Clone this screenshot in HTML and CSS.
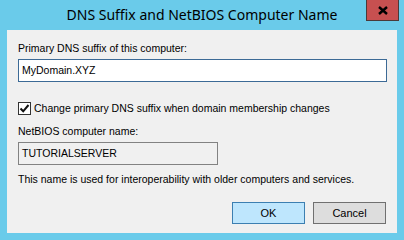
FILE: index.html
```html
<!DOCTYPE html>
<html>
<head>
<meta charset="utf-8">
<link rel="stylesheet" href="styles.css">
</head>
<body>
<div class="window">
  <div class="titlebar">
    <div class="title">DNS Suffix and NetBIOS Computer Name</div>
    <div class="close">
      <svg width="10" height="9" viewBox="0 0 10 9"><path d="M1 1 L9 8 M9 1 L1 8" stroke="#000" stroke-width="2.4" fill="none"/></svg>
    </div>
  </div>
  <div class="client">
    <div class="label">Primary DNS suffix of this computer:</div>
    <div class="input focus">MyDomain.XYZ</div>
    <div class="check-row">
      <span class="checkbox"><svg width="11" height="11" viewBox="0 0 11 11"><path d="M1.5 5.5 L4.2 8.3 L9.5 2" stroke="#111" stroke-width="2" fill="none"/></svg></span>
      <span class="check-label">Change primary DNS suffix when domain membership changes</span>
    </div>
    <div class="label nb">NetBIOS computer name:</div>
    <div class="input readonly">TUTORIALSERVER</div>
    <div class="note">This name is used for interoperability with older computers and services.</div>
    <div class="buttons">
      <button class="btn default">OK</button>
      <button class="btn">Cancel</button>
    </div>
  </div>
</div>
</body>
</html>
```

FILE: styles.css
```css
html, body {
  margin: 0;
  padding: 0;
}
body {
  width: 404px;
  height: 240px;
  background: #6acbea;
  overflow: hidden;
}
.window {
  display: flex;
  flex-direction: column;
  width: 404px;
  height: 240px;
  padding: 0 7px 7px 7px;
  box-sizing: border-box;
}
.titlebar {
  position: relative;
  height: 30px;
  flex: none;
  display: flex;
  align-items: center;
  justify-content: center;
}
.title {
  font-family: "Noto Sans", "Open Sans", sans-serif;
  font-size: 14px;
  color: #000;
  margin-top: -2px;
}
.close {
  position: absolute;
  left: 359px;
  top: 0;
  width: 31px;
  height: 20px;
  background: #c75050;
  border: 1px solid #4a3a3a;
  border-top: none;
  display: flex;
  align-items: center;
  justify-content: center;
}
.client {
  flex: 1;
  background: #f0f0f0;
  display: flex;
  flex-direction: column;
  padding: 12px 11px 0 11px;
  font-family: "Liberation Sans", Arial, sans-serif;
  font-size: 10.5px;
  color: #000;
}
.label {
  line-height: 13px;
  height: 13px;
}
.input {
  margin-top: 4px;
  height: 23px;
  box-sizing: border-box;
  line-height: 21px;
  padding-left: 3px;
  font-size: 10.5px;
}
.input.focus {
  width: 369px;
  background: #fff;
  border: 1px solid #3c6a96;
}
.input.readonly {
  width: 200px;
  background: #f0f0f0;
  border: 1px solid #828282;
}
.check-row {
  display: flex;
  align-items: center;
  margin-top: 20px;
  height: 13px;
}
.checkbox {
  width: 13px;
  height: 13px;
  box-sizing: border-box;
  border: 1px solid #333;
  background: #fff;
  display: flex;
  align-items: center;
  justify-content: center;
}
.check-label {
  margin-left: 3px;
  line-height: 13px;
}
.label.nb {
  margin-top: 10px;
}
.note {
  margin-top: 8px;
  line-height: 13px;
}
.buttons {
  display: flex;
  justify-content: flex-end;
  gap: 8px;
  margin-top: 16px;
}
.btn {
  width: 73px;
  height: 22px;
  box-sizing: border-box;
  font-family: "Liberation Sans", Arial, sans-serif;
  font-size: 11px;
  color: #000;
  padding: 0;
  margin: 0;
  background: #dddddd;
  border: 1px solid #707070;
  border-radius: 0;
}
.btn.default {
  background: #bee6fd;
  border: 1px solid #3c7fb1;
}
```
